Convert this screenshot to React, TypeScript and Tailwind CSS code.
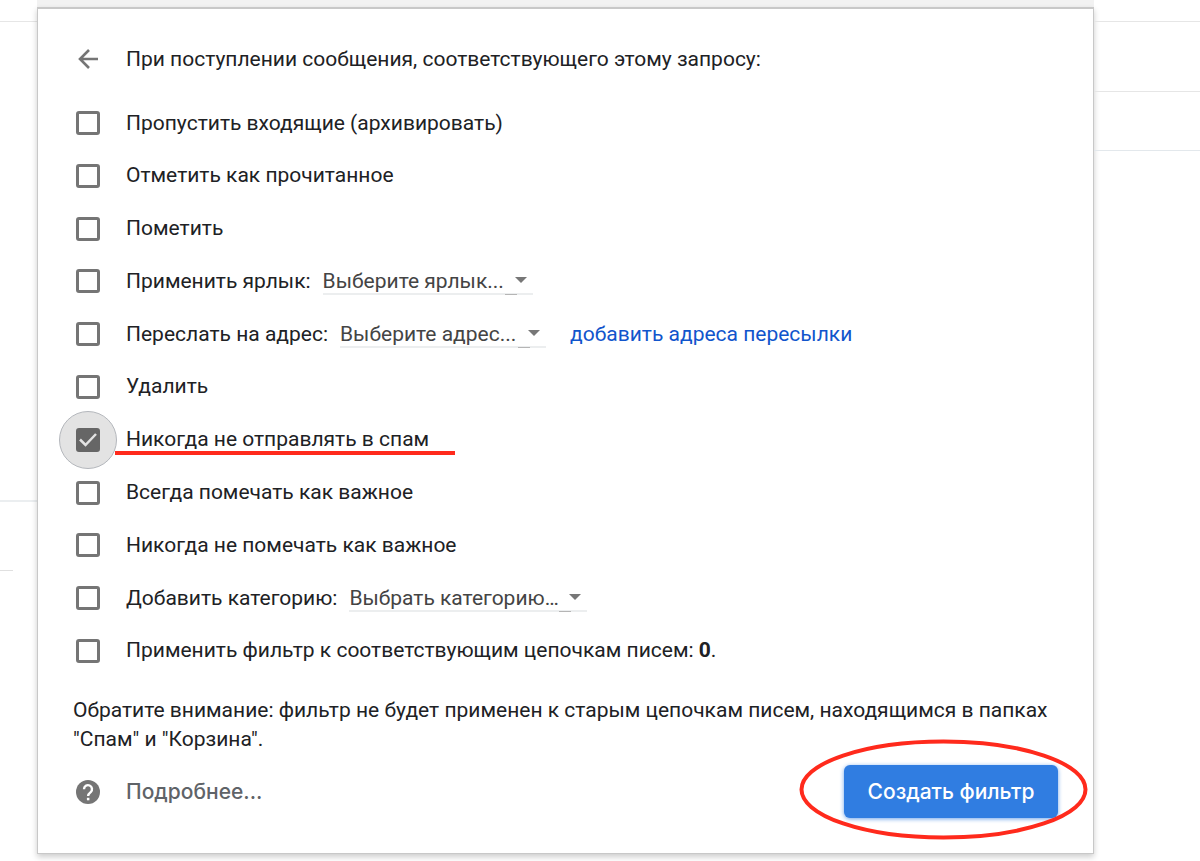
import type { ReactNode } from "react";

type SelectProps = { label: string; text: string; width: string };

function FilterSelect({ label, text, width }: SelectProps) {
  return (
    <span className={`relative ml-3 inline-flex ${width}`}>
      <select
        aria-label={label}
        className="h-7 w-full appearance-none rounded-none border-b-2 border-[#eceeef] bg-transparent pr-5 text-[#444]"
      >
        <option>{text}</option>
      </select>
      <svg className="pointer-events-none absolute right-[6px] top-[10px] h-[6px] w-3" viewBox="0 0 12 6">
        <path d="M0 0h12L6 6z" fill="#777" />
      </svg>
      <span className="pointer-events-none absolute bottom-0 right-4 h-px w-3 bg-[#b5b5b5]" />
    </span>
  );
}

type Row = { id: string; label: ReactNode; extra?: ReactNode; checked?: boolean };

const rows: Row[] = [
  { id: "skip", label: "Пропустить входящие (архивировать)" },
  { id: "read", label: "Отметить как прочитанное" },
  { id: "star", label: "Пометить" },
  {
    id: "label",
    label: "Применить ярлык:",
    extra: <FilterSelect label="Ярлык" text="Выберите ярлык..." width="w-[210px]" />,
  },
  {
    id: "forward",
    label: "Переслать на адрес:",
    extra: (
      <>
        <FilterSelect label="Адрес" text="Выберите адрес..." width="w-[206px]" />
        <a href="#" className="ml-6 text-[#1155cc]">
          добавить адреса пересылки
        </a>
      </>
    ),
  },
  { id: "delete", label: "Удалить" },
  { id: "spam", label: "Никогда не отправлять в спам", checked: true },
  { id: "important", label: "Всегда помечать как важное" },
  { id: "unimportant", label: "Никогда не помечать как важное" },
  {
    id: "category",
    label: "Добавить категорию:",
    extra: <FilterSelect label="Категория" text="Выбрать категорию…" width="w-[238px]" />,
  },
  {
    id: "apply",
    label: (
      <>
        Применить фильтр к соответствующим цепочкам писем: <b>0</b>.
      </>
    ),
  },
];

function FilterRow({ id, label, extra, checked }: Row) {
  return (
    <li className="relative flex h-[52px] items-center pl-[3px]">
      <span className="relative mr-[26px] flex h-6 w-6 shrink-0">
        {checked && (
          <span className="absolute -inset-[17px] rounded-full border border-[#b4b7bc] bg-[#e3e3e3]" />
        )}
        <input
          id={id}
          type="checkbox"
          defaultChecked={checked}
          className="peer relative h-6 w-6 appearance-none rounded-[3px] border-3 border-[#757575] checked:border-[#666] checked:bg-[#666]"
        />
        <svg
          className="pointer-events-none absolute inset-0 hidden h-6 w-6 peer-checked:block"
          viewBox="0 0 24 24"
          fill="none"
          stroke="#e3e3e3"
          strokeWidth={2.5}
        >
          <path d="M4 11.500l5.500 5.500L20 6" />
        </svg>
      </span>
      <label htmlFor={id}>{label}</label>
      {extra}
      {checked && <span className="absolute bottom-[11px] left-[42px] h-1 w-[340px] bg-[#ff2a1c]" />}
    </li>
  );
}

export default function App() {
  return (
    <div className="flex overflow-hidden bg-white pb-2 font-['Roboto',sans-serif] text-[21px] leading-[29px] text-[#202124]">
      {/* Inbox edge, left of the dialog */}
      <div className="w-[37px] shrink-0">
        <div className="h-[22px] border-b border-[#e6e6e6]" />
        <div className="h-[480px] border-b-2 border-[#ebeef0]" />
        <div className="h-[69px] w-[13px] border-b border-[#e0e0e0]" />
      </div>

      <main className="min-w-0 flex-1">
        <div className="h-[7px] bg-[#f2f2f2]" />
        <div className="border border-t-2 border-[#c8c8c8] bg-white px-[35px] pb-[35px] pt-8 shadow-[0_3px_6px_rgba(0,0,0,0.2)]">
          <header className="mb-5 flex h-9 items-center pl-[3px]">
            <button type="button" aria-label="Назад" className="mr-[26px] flex h-6 w-6 items-center justify-center">
              <svg className="h-5 w-5" viewBox="0 0 20 20" fill="none" stroke="#757575" strokeWidth={2.6}>
                <path d="M11 1L2 10l9 9M2 10h18" />
              </svg>
            </button>
            <h1>При поступлении сообщения, соответствующего этому запросу:</h1>
          </header>

          <ul className="flex h-[580px] flex-col justify-between">
            {rows.map((row) => (
              <FilterRow key={row.id} {...row} />
            ))}
          </ul>

          <p className="mt-[19px]">
            Обратите внимание: фильтр не будет применен к старым цепочкам писем, находящимся в папках "Спам" и
            "Корзина".
          </p>

          <footer className="mt-[11px] flex items-center justify-between pl-[3px]">
            <a href="#" className="flex items-center gap-[26px] font-['Inter',sans-serif] font-medium text-[#5f6368]">
              <svg className="h-6 w-6" viewBox="0 0 24 24">
                <circle cx="12" cy="12" r="12" fill="#757575" />
                <path
                  d="M8 9.200a4 4 0 1 1 6.700 2.900c-1.700 1.400-2.600 2-2.600 3.900"
                  fill="none"
                  stroke="#fff"
                  strokeWidth={2.4}
                />
                <path d="M10.900 17.800h2.500v2.500h-2.500z" fill="#fff" />
              </svg>
              Подробнее...
            </a>
            <div className="relative">
              <button
                type="button"
                className="h-[53px] w-[214px] rounded-md bg-[#307de1] font-['Inter',sans-serif] font-medium text-white shadow-[0_1px_4px_rgba(48,125,225,0.7)]"
              >
                Создать фильтр
              </button>
              <svg
                className="pointer-events-none absolute -left-[45px] -top-[26px] h-[101px] w-[289px]"
                viewBox="0 0 289 101"
                fill="none"
              >
                <ellipse cx="144.500" cy="50.500" rx="142" ry="48" stroke="#ff2a1c" strokeWidth={4} />
              </svg>
            </div>
          </footer>
        </div>
      </main>

      {/* Inbox edge, right of the dialog */}
      <div className="w-[106px] shrink-0">
        <div className="h-[22px] border-b border-[#e6e6e6]" />
        <div className="h-[70px] border-b border-[#e6e6e6]" />
        <div className="h-[59px] border-b border-[#e3e8ec]" />
      </div>
    </div>
  );
}
